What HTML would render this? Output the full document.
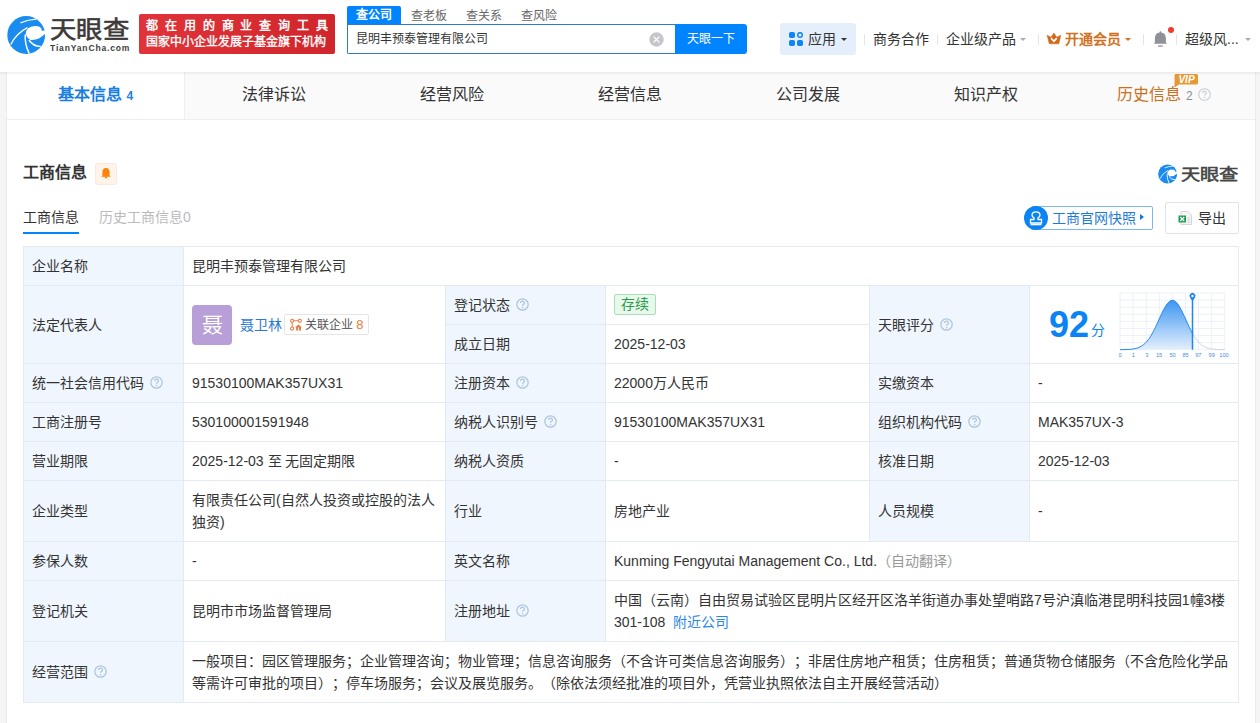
<!DOCTYPE html>
<html lang="zh-CN"><head><meta charset="utf-8">
<style>
*{box-sizing:border-box;margin:0;padding:0}
html,body{text-spacing-trim:space-all;width:1260px;height:723px;overflow:hidden;background:#f5f5f5;font-family:"Liberation Sans",sans-serif;color:#333;font-size:14px}
.abs{position:absolute}
#hdr{position:absolute;left:0;top:0;width:1260px;height:72px;background:#fff;box-shadow:0 1px 3px rgba(0,0,0,.09);z-index:2}
#main{position:absolute;left:6px;top:72px;width:1250px;height:651px;background:#fff;border-left:1px solid #ebebeb;border-right:1px solid #ebebeb}
.tabs{position:absolute;left:0;top:0;width:1248px;height:48px;background:#fafafa;border-bottom:1px solid #eee}
.tab{position:absolute;top:0;width:178px;height:47px;line-height:46px;text-align:center;font-size:16px;color:#333}
.tab.on{background:#fff;color:#1a7fe0;font-weight:bold;border-right:1px solid #efefef}
table.info{position:absolute;left:16px;top:174px;border-collapse:collapse;table-layout:fixed;width:1216px}
table.info td{border:1px solid #e5eaf0;padding:8px 8px;line-height:22px;font-size:14px;color:#333;vertical-align:middle}
table.info td.l{background:#f0f6fd}
.qi{display:inline-block;vertical-align:-1px;margin-left:6px}
.q{display:inline-block;width:13px;height:13px;border:1px solid #c6d6e8;border-radius:50%;font-size:9px;line-height:11px;text-align:center;color:#b8cbe0;vertical-align:-1px;margin-left:6px;font-weight:normal}
.sep{position:absolute;top:34px;width:1px;height:11px;background:#e5e5e5}
.arr{position:absolute;width:0;height:0;border-left:3.5px solid transparent;border-right:3.5px solid transparent;border-top:3.5px solid #999}
</style></head><body>
<div id="hdr">
  <!-- logo -->
  <svg class="abs" style="left:5px;top:13px" width="44" height="44" viewBox="0 0 44 44">
    <circle cx="21.2" cy="22" r="18.9" fill="#1a8cf0"/>
    <path d="M20.7 21 Q21 13.5 30 13 Q37 13.2 36.8 17.8 L41 17.5 L41 21.5 Q36 28 28 27.5 Q23 27 20.7 21 Z" fill="#fff"/>
    <path d="M40 20.8 Q33 28.3 24.3 26.8 Q28.5 33.3 35.5 33.2 Q39.6 28 40 20.8 Z" fill="#1a8cf0"/>
    <path d="M15.5 9.9 Q23 6.6 31.5 6.2" stroke="#fff" stroke-width="1.3" fill="none"/>
    <path d="M5.8 31.5 Q11 20.5 22.5 14.6" stroke="#fff" stroke-width="1.3" fill="none"/>
    <path d="M20.3 21.5 Q19.5 31 24.2 40.5" stroke="#fff" stroke-width="1.5" fill="none"/>
    <path d="M24 27 Q28.3 33.6 35.8 33.4" stroke="#fff" stroke-width="1.5" fill="none"/>
  </svg>
  <div class="abs" style="left:50px;top:15px;font-size:24px;line-height:30px;font-weight:normal;color:#3e3a39;-webkit-text-stroke:0.6px #3e3a39;transform:scaleX(1.1);transform-origin:0 0">天眼查</div>
  <div class="abs" style="left:50px;top:42px;font-size:8.5px;line-height:12px;font-weight:bold;color:#3d3d3d;letter-spacing:0.85px">TianYanCha.com</div>
  <!-- red banner -->
  <div class="abs" style="left:139px;top:14px;width:196px;height:40px;border-radius:2px;background:linear-gradient(90deg,#e0343a,#d0252b)"></div>
  <div class="abs" style="left:146px;top:18px;width:190px;font-size:12px;line-height:16px;color:#fff;letter-spacing:6.9px;-webkit-text-stroke:0.45px #fff;white-space:nowrap">都在用的商业查询工具</div>
  <div class="abs" style="left:146px;top:34px;width:190px;font-size:12px;line-height:16px;color:#fff;-webkit-text-stroke:0.35px #fff;white-space:nowrap">国家中小企业发展子基金旗下机构</div>
  <!-- search tabs -->
  <div class="abs" style="left:347px;top:6px;width:54px;height:18px;background:#0084ff;border-radius:2px 2px 0 0;color:#fff;font-size:12px;line-height:18px;text-align:center;font-weight:bold">查公司</div>
  <div class="abs" style="left:411px;top:7px;font-size:12px;line-height:18px;color:#666">查老板</div>
  <div class="abs" style="left:466px;top:7px;font-size:12px;line-height:18px;color:#666">查关系</div>
  <div class="abs" style="left:521px;top:7px;font-size:12px;line-height:18px;color:#666">查风险</div>
  <div class="abs" style="left:347px;top:24px;width:330px;height:30px;border:1px solid #2a7ccc;border-right:none;border-radius:0 0 0 2px;background:#fff"></div>
  <div class="abs" style="left:356px;top:24px;font-size:12px;line-height:30px;color:#333">昆明丰预泰管理有限公司</div>
  <svg class="abs" style="left:649px;top:32px" width="15" height="15" viewBox="0 0 15 15"><circle cx="7.5" cy="7.5" r="7.2" fill="#c5c6ca"/><path d="M4.6 4.6L10.4 10.4M10.4 4.6L4.6 10.4" stroke="#fff" stroke-width="1.3"/></svg>
  <div class="abs" style="left:675px;top:24px;width:72px;height:30px;background:#0084ff;border-radius:0 3px 3px 0;color:#fff;font-size:12px;line-height:30px;text-align:center">天眼一下</div>
  <!-- right nav -->
  <div class="abs" style="left:780px;top:23px;width:76px;height:32px;background:#e4effb;border-radius:3px"></div>
  <svg class="abs" style="left:789px;top:32px" width="14" height="14" viewBox="0 0 14 14"><rect x="0" y="0" width="6" height="6" rx="1.8" fill="#0d86f5"/><circle cx="11" cy="3" r="2.3" fill="none" stroke="#0d86f5" stroke-width="1.5"/><rect x="0" y="8" width="6" height="6" rx="1.8" fill="#0d86f5"/><rect x="8" y="8" width="6" height="6" rx="1.8" fill="#0d86f5"/></svg>
  <div class="abs" style="left:808px;top:30px;font-size:14px;line-height:18px;color:#333">应用</div>
  <div class="arr" style="left:841px;top:38px;border-top-color:#333"></div>
  <div class="sep" style="left:864px"></div>
  <div class="abs" style="left:873px;top:30px;font-size:14px;line-height:18px;color:#333">商务合作</div>
  <div class="sep" style="left:937px"></div>
  <div class="abs" style="left:946px;top:30px;font-size:14px;line-height:18px;color:#333">企业级产品</div>
  <div class="arr" style="left:1020px;top:38px;border-top-color:#aaa"></div>
  <div class="sep" style="left:1038px"></div>
  <svg class="abs" style="left:1046px;top:32px" width="16" height="13" viewBox="-1 -1 16 13"><path d="M0.1 2.2 L4 4.2 L6.9 0 L9.8 4.2 L13.8 2.2 L11.9 10.8 L2.3 10.8 Z" fill="#d2691a" stroke="#d2691a" stroke-width="0.5" stroke-linejoin="round"/><path d="M4 5.2 L6.9 8.3 L9.8 5.2" stroke="#fff" stroke-width="1.7" fill="none"/></svg>
  <div class="abs" style="left:1065px;top:30px;font-size:14px;line-height:18px;color:#d2701c;font-weight:bold">开通会员</div>
  <div class="arr" style="left:1125px;top:38px;border-top-color:#d2701c"></div>
  <div class="sep" style="left:1143px"></div>
  <svg class="abs" style="left:1153px;top:31px" width="15" height="16" viewBox="0 0 15 16"><path d="M7.4 1.6 C3.4 1.6 1.9 4.2 1.9 8 L1.9 11.6 L0.8 12.8 L14 12.8 L12.9 11.6 L12.9 8 C12.9 4.2 11.4 1.6 7.4 1.6 Z" fill="#8e9196"/><rect x="6.8" y="0.2" width="1.2" height="2" fill="#8e9196"/><rect x="5.1" y="14.3" width="4.6" height="1.5" fill="#9a9da2"/></svg>
  <div class="abs" style="left:1168px;top:27px;width:6px;height:6px;border-radius:50%;background:#f2392f"></div>
  <div class="sep" style="left:1176px"></div>
  <div class="abs" style="left:1185px;top:30px;font-size:14px;line-height:18px;color:#333">超级风...</div>
  <div class="arr" style="left:1245px;top:38px;border-top-color:#aaa"></div>
</div>

<div id="main">
  <div class="tabs">
    <div class="tab on" style="left:0">基本信息 <span style="font-size:12px;font-weight:bold">4</span></div>
    <div class="tab" style="left:178px">法律诉讼</div>
    <div class="tab" style="left:356px">经营风险</div>
    <div class="tab" style="left:534px">经营信息</div>
    <div class="tab" style="left:712px">公司发展</div>
    <div class="tab" style="left:890px">知识产权</div>
    <div class="tab" style="left:1068px;color:#c8711f">历史信息 <span style="font-size:12px;color:#8a8f99">2</span><svg style="display:inline-block;vertical-align:-1px;margin-left:5px" width="13" height="13" viewBox="0 0 13 13"><circle cx="6.5" cy="6.5" r="5.8" fill="none" stroke="#c5ccd6" stroke-width="1.1"/><path d="M4.7 5.1 C4.7 3.9 5.5 3.3 6.5 3.3 C7.5 3.3 8.3 3.9 8.3 4.9 C8.3 6.1 6.6 6.2 6.6 7.6" fill="none" stroke="#c5ccd6" stroke-width="1.1"/><circle cx="6.6" cy="9.4" r="0.7" fill="#c5ccd6"/></svg></div>
  </div>
  <svg class="abs" style="left:1166px;top:1px" width="26" height="16" viewBox="0 0 26 16"><path d="M2.5 1 H23.5 Q25 1 25 2.5 V10 Q25 11.5 23.5 11.5 H6 L1.5 14.5 L1.5 2.5 Q1.5 1 2.5 1 Z" fill="#e69a35"/><text x="13.5" y="10" text-anchor="middle" font-family="Liberation Sans" font-size="10" font-weight="bold" font-style="italic" fill="#fff">VIP</text></svg>

  <div class="abs" style="left:16px;top:90px;font-size:16px;line-height:22px;font-weight:bold;color:#333">工商信息</div>
  <div class="abs" style="left:88px;top:91px;width:22px;height:22px;background:#fff4ea;border:1px solid #fbe8d8;border-radius:3px"></div>
  <svg class="abs" style="left:94px;top:95px" width="11" height="13" viewBox="0 0 11 13"><path d="M5 1 C2.4 1 1.4 3 1.4 5.5 L1.4 8.4 L0.2 9.8 L9.8 9.8 L8.6 8.4 L8.6 5.5 C8.6 3 7.6 1 5 1Z" fill="#ff8208"/><path d="M3.2 9.6 L5 11.8 L6.8 9.6 Z" fill="#f07a10"/></svg>

  <div class="abs" style="left:16px;top:134px;font-size:14px;line-height:22px;color:#333">工商信息</div>
  <div class="abs" style="left:92px;top:134px;font-size:14px;line-height:22px;color:#bbb">历史工商信息0</div>
  <div class="abs" style="left:16px;top:160px;width:56px;height:2px;background:#0084ff"></div>

  <svg class="abs" style="left:1150px;top:91px" width="22" height="22" viewBox="0 0 44 44">
    <circle cx="21.2" cy="22" r="18.9" fill="#1a8cf0"/>
    <path d="M20.7 21 Q21 13.5 30 13 Q37 13.2 36.8 17.8 L41 17.5 L41 21.5 Q36 28 28 27.5 Q23 27 20.7 21 Z" fill="#fff"/>
    <path d="M40 20.8 Q33 28.3 24.3 26.8 Q28.5 33.3 35.5 33.2 Q39.6 28 40 20.8 Z" fill="#1a8cf0"/>
    <path d="M15.5 9.9 Q23 6.6 31.5 6.2" stroke="#fff" stroke-width="1.6" fill="none"/>
    <path d="M5.8 31.5 Q11 20.5 22.5 14.6" stroke="#fff" stroke-width="1.6" fill="none"/>
    <path d="M20.3 21.5 Q19.5 31 24.2 40.5" stroke="#fff" stroke-width="1.8" fill="none"/>
    <path d="M24 27 Q28.3 33.6 35.8 33.4" stroke="#fff" stroke-width="1.8" fill="none"/>
  </svg>
  <div class="abs" style="left:1174px;top:93px;font-size:16px;line-height:20px;font-weight:normal;-webkit-text-stroke:0.6px #474747;color:#474747;transform:scaleX(1.2);transform-origin:0 0">天眼查</div>

  <div class="abs" style="left:1024px;top:134px;width:122px;height:24px;border:1px solid #7db6f0;border-radius:2px"></div>
  <div class="abs" style="left:1017px;top:133.5px;width:24px;height:24px;border-radius:50%;background:#0a84f5"></div>
  <svg class="abs" style="left:1022px;top:139px" width="14" height="15" viewBox="0 0 14 15"><path d="M5 8.5 V6.8 C3.6 6.2 3 5.2 3 4 C3 2 4.8 0.8 7 0.8 C9.2 0.8 11 2 11 4 C11 5.2 10.4 6.2 9 6.8 V8.5 H12.5 V12 H1.5 V8.5 Z" fill="none" stroke="#fff" stroke-width="1.3"/><rect x="1.5" y="12.8" width="11" height="1.5" fill="#fff"/></svg>
  <div class="abs" style="left:1045px;top:135px;font-size:14px;line-height:22px;color:#1f7bd8">工商官网快照</div>
  <div class="abs" style="left:1133px;top:142px;width:0;height:0;border-top:3.5px solid transparent;border-bottom:3.5px solid transparent;border-left:4px solid #0a7be0"></div>

  <div class="abs" style="left:1158px;top:130px;width:74px;height:32px;border:1px solid #e2e2e2;border-radius:2px;background:#fff"></div>
  <svg class="abs" style="left:1171px;top:139px" width="14" height="14" viewBox="0 0 14 14"><path d="M3 0.5 H10 L13.5 4 V13.5 H3 Z" fill="#f4f4f4" stroke="#d6d6d6" stroke-width="1"/><rect x="0.5" y="4.5" width="7.5" height="7" fill="#1f9d55"/><path d="M2.3 6 L6.2 10 M6.2 6 L2.3 10" stroke="#fff" stroke-width="1.1"/><path d="M9.5 7 H12 M9.5 9 H12 M9.5 11 H12" stroke="#ccc" stroke-width="0.8"/></svg>
  <div class="abs" style="left:1191px;top:135px;font-size:14px;line-height:22px;color:#333">导出</div>

  <table class="info">
    <colgroup><col style="width:160px"><col style="width:262px"><col style="width:160px"><col style="width:264px"><col style="width:160px"><col style="width:209px"></colgroup>
    <tr><td class="l">企业名称</td><td colspan="5">昆明丰预泰管理有限公司</td></tr>
    <tr><td class="l" rowspan="2">法定代表人</td>
      <td rowspan="2"><div style="position:relative;height:60px">
        <div class="abs" style="left:0;top:10px;width:40px;height:40px;border-radius:4px;background:#b99fd7;color:#fff;font-size:21px;line-height:40px;text-align:center">聂</div>
        <div class="abs" style="left:48px;top:19px;font-size:14px;line-height:22px;color:#2a7ad4">聂卫林</div>
        <div class="abs" style="left:92px;top:19px;width:85px;height:21px;border:1px solid #e6e6e6;border-radius:2px"></div>
        <svg class="abs" style="left:98px;top:23px" width="14" height="14" viewBox="0 0 14 14"><g stroke="#e9804a" stroke-width="1.1" fill="none"><circle cx="2.2" cy="2.8" r="1.6"/><circle cx="9.8" cy="2.8" r="1.6"/><circle cx="2.1" cy="10.6" r="1.6"/><path d="M2.2 4.4 V9 M3.8 2.8 H8.2"/></g><path d="M8.4 6.6 L5 9.2 H6 V12.4 H11 V9.2 H11.9 Z" fill="#e9804a"/><path d="M8.4 9.6 V12.4" stroke="#fff" stroke-width="0.9"/></svg>
        <div class="abs" style="left:113px;top:19px;font-size:12px;line-height:21px;color:#555">关联企业 <span style="color:#ee7a3a;font-size:13px">8</span></div>
      </div></td>
      <td class="l">登记状态<svg class="qi" width="13" height="13" viewBox="0 0 13 13"><circle cx="6.5" cy="6.5" r="5.7" fill="none" stroke="#adc5df" stroke-width="1.25"/><path d="M4.6 5.1 C4.6 3.8 5.4 3.1 6.5 3.1 C7.6 3.1 8.4 3.8 8.4 4.9 C8.4 6.2 6.6 6.3 6.6 7.8" fill="none" stroke="#adc5df" stroke-width="1.25"/><circle cx="6.6" cy="9.6" r="0.8" fill="#adc5df"/></svg></td>
      <td><span style="display:inline-block;vertical-align:1px;height:21px;line-height:19px;padding:0 6px;border:1px solid #a6dfb5;background:#e8f8ec;color:#2d9b4b;border-radius:2px;font-size:14px">存续</span></td>
      <td class="l" rowspan="2">天眼评分<svg class="qi" width="13" height="13" viewBox="0 0 13 13"><circle cx="6.5" cy="6.5" r="5.7" fill="none" stroke="#adc5df" stroke-width="1.25"/><path d="M4.6 5.1 C4.6 3.8 5.4 3.1 6.5 3.1 C7.6 3.1 8.4 3.8 8.4 4.9 C8.4 6.2 6.6 6.3 6.6 7.8" fill="none" stroke="#adc5df" stroke-width="1.25"/><circle cx="6.6" cy="9.6" r="0.8" fill="#adc5df"/></svg></td>
      <td rowspan="2"><div style="position:relative;height:60px"></div></td>
    </tr>
    <tr><td class="l">成立日期</td><td>2025-12-03</td></tr>
    <tr><td class="l">统一社会信用代码<svg class="qi" width="13" height="13" viewBox="0 0 13 13"><circle cx="6.5" cy="6.5" r="5.7" fill="none" stroke="#adc5df" stroke-width="1.25"/><path d="M4.6 5.1 C4.6 3.8 5.4 3.1 6.5 3.1 C7.6 3.1 8.4 3.8 8.4 4.9 C8.4 6.2 6.6 6.3 6.6 7.8" fill="none" stroke="#adc5df" stroke-width="1.25"/><circle cx="6.6" cy="9.6" r="0.8" fill="#adc5df"/></svg></td><td>91530100MAK357UX31</td><td class="l">注册资本<svg class="qi" width="13" height="13" viewBox="0 0 13 13"><circle cx="6.5" cy="6.5" r="5.7" fill="none" stroke="#adc5df" stroke-width="1.25"/><path d="M4.6 5.1 C4.6 3.8 5.4 3.1 6.5 3.1 C7.6 3.1 8.4 3.8 8.4 4.9 C8.4 6.2 6.6 6.3 6.6 7.8" fill="none" stroke="#adc5df" stroke-width="1.25"/><circle cx="6.6" cy="9.6" r="0.8" fill="#adc5df"/></svg></td><td>22000万人民币</td><td class="l">实缴资本</td><td>-</td></tr>
    <tr><td class="l">工商注册号</td><td>530100001591948</td><td class="l">纳税人识别号<svg class="qi" width="13" height="13" viewBox="0 0 13 13"><circle cx="6.5" cy="6.5" r="5.7" fill="none" stroke="#adc5df" stroke-width="1.25"/><path d="M4.6 5.1 C4.6 3.8 5.4 3.1 6.5 3.1 C7.6 3.1 8.4 3.8 8.4 4.9 C8.4 6.2 6.6 6.3 6.6 7.8" fill="none" stroke="#adc5df" stroke-width="1.25"/><circle cx="6.6" cy="9.6" r="0.8" fill="#adc5df"/></svg></td><td>91530100MAK357UX31</td><td class="l">组织机构代码<svg class="qi" width="13" height="13" viewBox="0 0 13 13"><circle cx="6.5" cy="6.5" r="5.7" fill="none" stroke="#adc5df" stroke-width="1.25"/><path d="M4.6 5.1 C4.6 3.8 5.4 3.1 6.5 3.1 C7.6 3.1 8.4 3.8 8.4 4.9 C8.4 6.2 6.6 6.3 6.6 7.8" fill="none" stroke="#adc5df" stroke-width="1.25"/><circle cx="6.6" cy="9.6" r="0.8" fill="#adc5df"/></svg></td><td>MAK357UX-3</td></tr>
    <tr><td class="l">营业期限</td><td>2025-12-03 至 无固定期限</td><td class="l">纳税人资质</td><td>-</td><td class="l">核准日期</td><td>2025-12-03</td></tr>
    <tr><td class="l">企业类型</td><td>有限责任公司(自然人投资或控股的法人独资)</td><td class="l">行业</td><td>房地产业</td><td class="l">人员规模</td><td>-</td></tr>
    <tr><td class="l">参保人数</td><td>-</td><td class="l">英文名称</td><td colspan="3">Kunming Fengyutai Management Co., Ltd.<span style="color:#999">（自动翻译）</span></td></tr>
    <tr><td class="l">登记机关</td><td>昆明市市场监督管理局</td><td class="l">注册地址<svg class="qi" width="13" height="13" viewBox="0 0 13 13"><circle cx="6.5" cy="6.5" r="5.7" fill="none" stroke="#adc5df" stroke-width="1.25"/><path d="M4.6 5.1 C4.6 3.8 5.4 3.1 6.5 3.1 C7.6 3.1 8.4 3.8 8.4 4.9 C8.4 6.2 6.6 6.3 6.6 7.8" fill="none" stroke="#adc5df" stroke-width="1.25"/><circle cx="6.6" cy="9.6" r="0.8" fill="#adc5df"/></svg></td><td colspan="3">中国（云南）自由贸易试验区昆明片区经开区洛羊街道办事处望哨路7号沪滇临港昆明科技园1幢3楼301-108<span style="color:#2b87ea;margin-left:8px">附近公司</span></td></tr>
    <tr><td class="l">经营范围<svg class="qi" width="13" height="13" viewBox="0 0 13 13"><circle cx="6.5" cy="6.5" r="5.7" fill="none" stroke="#adc5df" stroke-width="1.25"/><path d="M4.6 5.1 C4.6 3.8 5.4 3.1 6.5 3.1 C7.6 3.1 8.4 3.8 8.4 4.9 C8.4 6.2 6.6 6.3 6.6 7.8" fill="none" stroke="#adc5df" stroke-width="1.25"/><circle cx="6.6" cy="9.6" r="0.8" fill="#adc5df"/></svg></td><td colspan="5">一般项目：园区管理服务；企业管理咨询；物业管理；信息咨询服务（不含许可类信息咨询服务）；非居住房地产租赁；住房租赁；普通货物仓储服务（不含危险化学品等需许可审批的项目）；停车场服务；会议及展览服务。（除依法须经批准的项目外，凭营业执照依法自主开展经营活动）</td></tr>
  </table>

  <div class="abs" style="left:1042px;top:234.5px;font-size:36px;line-height:36px;font-weight:bold;color:#0a84f5">92</div>
  <div class="abs" style="left:1084px;top:250px;font-size:14px;line-height:16px;color:#0a84f5">分</div>
  <svg class="abs" style="left:1111px;top:218px" width="112" height="72" viewBox="-2 -3 112 72">
    <defs><linearGradient id="gf" x1="0" y1="0" x2="0" y2="1"><stop offset="0" stop-color="#3d95f2"/><stop offset="1" stop-color="#e3f0fd"/></linearGradient></defs>
    <g stroke="#e6edf6" stroke-width="0.8"><line x1="0.00" y1="0" x2="0.00" y2="56.7" /><line x1="13.09" y1="0" x2="13.09" y2="56.7" /><line x1="26.18" y1="0" x2="26.18" y2="56.7" /><line x1="39.26" y1="0" x2="39.26" y2="56.7" /><line x1="52.35" y1="0" x2="52.35" y2="56.7" /><line x1="65.44" y1="0" x2="65.44" y2="56.7" /><line x1="78.53" y1="0" x2="78.53" y2="56.7" /><line x1="91.61" y1="0" x2="91.61" y2="56.7" /><line x1="104.70" y1="0" x2="104.70" y2="56.7" /><line x1="0" y1="0.00" x2="104.7" y2="0.00" /><line x1="0" y1="7.09" x2="104.7" y2="7.09" /><line x1="0" y1="14.18" x2="104.7" y2="14.18" /><line x1="0" y1="21.26" x2="104.7" y2="21.26" /><line x1="0" y1="28.35" x2="104.7" y2="28.35" /><line x1="0" y1="35.44" x2="104.7" y2="35.44" /><line x1="0" y1="42.53" x2="104.7" y2="42.53" /><line x1="0" y1="49.61" x2="104.7" y2="49.61" /><line x1="0" y1="56.70" x2="104.7" y2="56.70" /></g>
    <path d="M0.00 56.67 L1.01 56.66 L2.01 56.65 L3.02 56.64 L4.03 56.62 L5.03 56.60 L6.04 56.56 L7.05 56.53 L8.05 56.48 L9.06 56.41 L10.07 56.34 L11.07 56.24 L12.08 56.13 L13.09 55.99 L14.09 55.82 L15.10 55.61 L16.11 55.37 L17.11 55.08 L18.12 54.73 L19.13 54.33 L20.13 53.86 L21.14 53.32 L22.15 52.69 L23.15 51.97 L24.16 51.16 L25.17 50.24 L26.18 49.21 L27.18 48.07 L28.19 46.81 L29.20 45.42 L30.20 43.92 L31.21 42.29 L32.22 40.55 L33.22 38.69 L34.23 36.73 L35.24 34.69 L36.24 32.56 L37.25 30.38 L38.26 28.17 L39.26 25.93 L40.27 23.71 L41.28 21.52 L42.28 19.39 L43.29 17.36 L44.30 15.44 L45.30 13.68 L46.31 12.08 L47.32 10.68 L48.32 9.50 L49.33 8.56 L50.34 7.87 L51.34 7.45 L52.35 7.30 L53.36 7.42 L54.36 7.82 L55.37 8.48 L56.38 9.40 L57.38 10.55 L58.39 11.93 L59.40 13.51 L60.40 15.26 L61.41 17.16 L62.42 19.19 L63.42 21.31 L64.43 23.49 L65.44 25.71 L66.44 27.94 L67.45 30.16 L68.46 32.35 L69.46 34.48 L70.47 36.53 L71.48 38.50 L72.48 40.37 L72.50 40.39 L72.5 56.7 L0 56.7 Z" fill="url(#gf)"/>
    <path d="M0.00 56.67 L1.01 56.66 L2.01 56.65 L3.02 56.64 L4.03 56.62 L5.03 56.60 L6.04 56.56 L7.05 56.53 L8.05 56.48 L9.06 56.41 L10.07 56.34 L11.07 56.24 L12.08 56.13 L13.09 55.99 L14.09 55.82 L15.10 55.61 L16.11 55.37 L17.11 55.08 L18.12 54.73 L19.13 54.33 L20.13 53.86 L21.14 53.32 L22.15 52.69 L23.15 51.97 L24.16 51.16 L25.17 50.24 L26.18 49.21 L27.18 48.07 L28.19 46.81 L29.20 45.42 L30.20 43.92 L31.21 42.29 L32.22 40.55 L33.22 38.69 L34.23 36.73 L35.24 34.69 L36.24 32.56 L37.25 30.38 L38.26 28.17 L39.26 25.93 L40.27 23.71 L41.28 21.52 L42.28 19.39 L43.29 17.36 L44.30 15.44 L45.30 13.68 L46.31 12.08 L47.32 10.68 L48.32 9.50 L49.33 8.56 L50.34 7.87 L51.34 7.45 L52.35 7.30 L53.36 7.42 L54.36 7.82 L55.37 8.48 L56.38 9.40 L57.38 10.55 L58.39 11.93 L59.40 13.51 L60.40 15.26 L61.41 17.16 L62.42 19.19 L63.42 21.31 L64.43 23.49 L65.44 25.71 L66.44 27.94 L67.45 30.16 L68.46 32.35 L69.46 34.48 L70.47 36.53 L71.48 38.50 L72.48 40.37 L72.50 40.39" fill="none" stroke="#1f86ee" stroke-width="1"/>
    <path d="M72.50 40.39 L73.49 42.12 L74.50 43.76 L75.50 45.28 L76.51 46.68 L77.52 47.95 L78.53 49.11 L79.53 50.14 L80.54 51.07 L81.55 51.90 L82.55 52.62 L83.56 53.26 L84.57 53.81 L85.57 54.29 L86.58 54.70 L87.59 55.05 L88.59 55.34 L89.60 55.59 L90.61 55.80 L91.61 55.97 L92.62 56.12 L93.63 56.23 L94.63 56.33 L95.64 56.41 L96.65 56.47 L97.65 56.52 L98.66 56.56 L99.67 56.59 L100.67 56.62 L101.68 56.64 L102.69 56.65 L103.69 56.66 L104.70 56.67" fill="none" stroke="#c9d3de" stroke-width="1"/>
    <line x1="72.5" y1="6" x2="72.5" y2="56.7" stroke="#1f86ee" stroke-width="1.5"/>
    <path d="M72.5 8.5 L70 4.6 A3 3 0 1 1 75 4.6 Z" fill="#1f86ee"/>
    <circle cx="72.5" cy="3" r="1.2" fill="#fff"/>
    <g fill="#3d8ee6" font-size="5.6" font-family="Liberation Sans" text-anchor="middle">
      <text x="0" y="64">0</text><text x="13.3" y="64">1</text><text x="26.7" y="64">3</text><text x="39" y="64">15</text><text x="52.5" y="64">50</text><text x="65.5" y="64">85</text><text x="78.3" y="64">97</text><text x="91.7" y="64">99</text><text x="104" y="64">100</text>
    </g>
  </svg>

</div>
</body></html>
